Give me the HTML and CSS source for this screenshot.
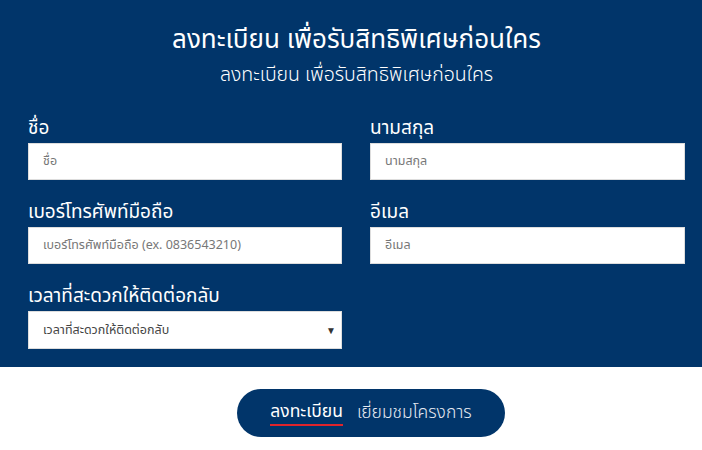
FILE: index.html
```html
<!DOCTYPE html>
<html lang="th">
<head>
  <meta charset="UTF-8" />
  <meta name="viewport" content="width=device-width, initial-scale=1" />
  <title>ลงทะเบียน</title>
  <link rel="stylesheet" href="styles.css">
</head>
<body>

  <section id="register">
    <h1>ลงทะเบียน เพื่อรับสิทธิพิเศษก่อนใคร</h1>
    <p class="sub">ลงทะเบียน เพื่อรับสิทธิพิเศษก่อนใคร</p>

    <form class="form-grid">
      <div class="field">
        <label for="fname">ชื่อ</label>
        <input id="fname" type="text" placeholder="ชื่อ" />
      </div>
      <div class="field">
        <label for="lname">นามสกุล</label>
        <input id="lname" type="text" placeholder="นามสกุล" />
      </div>
      <div class="field">
        <label for="tel">เบอร์โทรศัพท์มือถือ</label>
        <input id="tel" type="text" placeholder="เบอร์โทรศัพท์มือถือ (ex. 0836543210)" />
      </div>
      <div class="field">
        <label for="email">อีเมล</label>
        <input id="email" type="text" placeholder="อีเมล" />
      </div>
      <div class="field">
        <label for="time">เวลาที่สะดวกให้ติดต่อกลับ</label>
        <div class="select-box">
          <select id="time">
            <option>เวลาที่สะดวกให้ติดต่อกลับ</option>
          </select>
          <span class="arrow">▼</span>
        </div>
      </div>
    </form>
  </section>

  <nav id="bottom-bar">
    <div class="pill">
      <a class="active" href="#">ลงทะเบียน</a>
      <a href="#">เยี่ยมชมโครงการ</a>
    </div>
  </nav>

</body>
</html>
```

FILE: styles.css
```css
* {
  margin: 0;
  padding: 0;
  box-sizing: border-box;
}

body {
  font-family: 'Noto Sans Thai', 'Noto Sans', sans-serif;
  background: #fff;
  width: 702px;
  height: 450px;
  overflow: hidden;
}

#register {
  background: #01356a;
  color: #fff;
  height: 367px;
  padding: 22px 17px 0 28px;
}

#register h1 {
  text-align: center;
  font-size: 26px;
  font-weight: 400;
  line-height: 36px;
}

#register .sub {
  text-align: center;
  font-size: 19.5px;
  font-weight: 300;
  line-height: 26px;
  margin-top: 4px;
  margin-bottom: 29px;
}

.form-grid {
  display: grid;
  grid-template-columns: 314px 315px;
  column-gap: 28px;
  row-gap: 21px;
}

.field label {
  display: block;
  font-size: 19px;
  font-weight: 400;
  line-height: 24px;
  margin-bottom: 2px;
}

.field input,
.field select {
  width: 100%;
  height: 37px;
  border: 1px solid #ddd;
  background: #fff;
  padding: 0 14px;
  font-family: inherit;
  font-size: 12.5px;
  color: #666;
  outline: none;
}

.field input::placeholder {
  color: #777;
}

.select-box {
  position: relative;
}

.select-box select {
  appearance: none;
  height: 38px;
  color: #444;
}

.select-box .arrow {
  position: absolute;
  right: 6px;
  top: 12px;
  font-size: 10px;
  color: #333;
  pointer-events: none;
}

#bottom-bar {
  display: flex;
  justify-content: center;
  padding-top: 22px;
  padding-left: 40px;
}

.pill {
  background: #01356a;
  width: 268px;
  height: 48px;
  border-radius: 24px;
  display: flex;
  justify-content: center;
  align-items: center;
  gap: 14px;
}

.pill a {
  color: #e6ebf2;
  text-decoration: none;
  font-size: 17.5px;
  font-weight: 300;
  line-height: 24px;
}

.pill a.active {
  color: #fff;
  font-weight: 400;
  border-bottom: 2px solid #e0242b;
}
```
